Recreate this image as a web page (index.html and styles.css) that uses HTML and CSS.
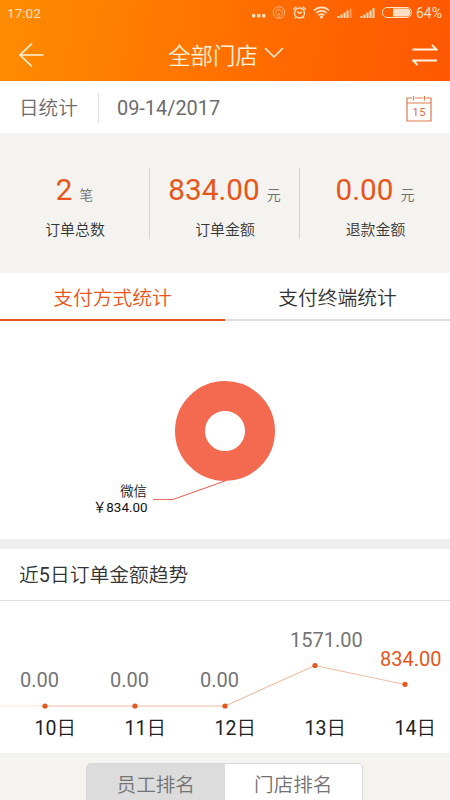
FILE: index.html
```html
<!DOCTYPE html>
<html lang="zh-CN">
<head>
<meta charset="UTF-8">
<title>全部门店</title>
<link rel="stylesheet" href="styles.css">
</head>
<body>
<header class="header">
  <div class="status">
    <span class="clock">17:02</span>
    <svg class="status-icons" width="164" height="26" viewBox="0 0 164 26" fill="none" stroke="#ffe0c2">
      <g fill="#ffe0c2" stroke="none"><rect x="1" y="14" width="3.4" height="3.4" rx="1"/><rect x="6" y="14" width="3.4" height="3.4" rx="1"/><rect x="11" y="14" width="3.4" height="3.4" rx="1"/></g>
      <g stroke="#ffb984"><circle cx="28" cy="12.5" r="5.8"/><path d="M26 15.5a3.3 3.3 0 1 1 4 0M28 13v5"/></g>
      <g stroke-width="1.4"><circle cx="48.500" cy="13" r="5"/><path d="M42.300 9.500l3-2.800M54.700 9.500l-3-2.800M46.200 11.500l2.300 1.800 2.600-1.500M45 17l-1.200 1.400M52 17l1.200 1.400"/></g>
      <g stroke-width="1.700"><path d="M63 10.500a10.500 10.500 0 0 1 15 0M65.300 13a7.300 7.300 0 0 1 10.400 0M67.600 15.400a4 4 0 0 1 5.800 0"/><circle cx="70.500" cy="17" r=".7"/></g>
      <g stroke-width="2"><path d="M87.500 16v2M90.500 14.500V18M93.500 12.500V18M96.500 10.500V18"/><path stroke="#ff9b5c" d="M99.500 8.500V18"/><path d="M110.500 16v2M113.500 14.500V18M116.500 12.500V18M119.500 10.500V18M122.500 8V18"/></g>
      <rect x="131.500" y="7.500" width="29" height="10" rx="4.500"/>
      <path fill="#ffe0c2" stroke="none" d="M142 8.500h13.500a4 4 0 0 1 4 4 4 4 0 0 1-4 4H142z"/>
    </svg>
    <span class="percent">64%</span>
  </div>
  <div class="titlebar">
    <svg width="26" height="26" viewBox="0 0 26 26" fill="none" stroke="#fff3df" stroke-width="1.700"><path d="M25.500 13H2M14 1.500L2 13l12 11.500"/></svg>
    <h1 class="title">全部门店<svg width="20" height="12" viewBox="0 0 20 12" fill="none" stroke="#fff3df" stroke-width="1.500"><path d="M1 0l9 9 9-9"/></svg></h1>
    <svg width="26" height="24" viewBox="0 0 26 24" fill="none" stroke="#fff3df" stroke-width="1.800"><path d="M0.500 6.500h24l-4.500-4.500M25 17.500H1l4.500 4.500"/></svg>
  </div>
</header>

<section class="datebar">
  <span class="period">日统计</span>
  <span class="date">09-14/2017</span>
  <svg width="26" height="27" viewBox="0 0 26 27" fill="none" stroke="#e07a4c" stroke-width="1.200"><path d="M6 3H1v23h24V3h-5M9 3h8M1 8h24M7.500 1v4.500M18.500 1v4.500"/><text class="cal-day" x="13.300" y="21" text-anchor="middle">15</text></svg>
</section>

<section class="stats">
  <div class="stat"><p class="amount">2<small>笔</small></p><p class="label">订单总数</p></div>
  <div class="stat"><p class="amount">834.00<small>元</small></p><p class="label">订单金额</p></div>
  <div class="stat"><p class="amount">0.00<small>元</small></p><p class="label">退款金额</p></div>
</section>

<nav class="tabs">
  <span class="tab active">支付方式统计</span>
  <span class="tab">支付终端统计</span>
</nav>

<section class="payment">
  <svg width="450" height="218" viewBox="0 0 450 218">
    <circle cx="225" cy="110" r="35" fill="none" stroke="#f46a50" stroke-width="30"/>
    <path d="M225 160L173 178.500h-20" fill="none" stroke="#e4685c" stroke-width="1.200"/>
    <g class="pie-label" text-anchor="end"><text class="cjk" x="147" y="174.500">微信</text><text x="147.500" y="190.500">￥834.00</text></g>
  </svg>
</section>

<section class="trend">
  <h2 class="trend-title">近<span class="num">5</span>日订单金额趋势</h2>
  <svg class="trend-chart" width="450" height="152" viewBox="0 0 450 152">
    <path d="M0 105h45" stroke="#fbe6d8"/>
    <path d="M45 105h180l90-40.500 90 19" fill="none" stroke="#ecbda4" stroke-width="1.100"/>
    <g fill="#e4571f"><circle cx="45" cy="105" r="2.600"/><circle cx="135" cy="105" r="2.600"/><circle cx="225" cy="105" r="2.600"/><circle cx="315" cy="64.500" r="2.600"/><circle cx="405" cy="83.300" r="2.600"/></g>
    <g class="values"><text x="20" y="86.300">0.00</text><text x="110" y="86.300">0.00</text><text x="200" y="86.300">0.00</text><text x="290" y="45.800">1571.00</text><text class="current" x="380" y="64.500">834.00</text></g>
    <g class="days"><text x="34.500" y="134">10<tspan class="cjk">日</tspan></text><text x="124.500" y="134">11<tspan class="cjk">日</tspan></text><text x="214.500" y="134">12<tspan class="cjk">日</tspan></text><text x="304.500" y="134">13<tspan class="cjk">日</tspan></text><text x="394.500" y="134">14<tspan class="cjk">日</tspan></text></g>
  </svg>
</section>

<section class="ranking">
  <div class="segmented"><span class="segment">员工排名</span><span class="segment selected">门店排名</span></div>
</section>
</body>
</html>
```

FILE: styles.css
```css
* { box-sizing: border-box; margin: 0; padding: 0; }
body {
  width: 450px;
  height: 800px;
  overflow: hidden;
  display: flex;
  flex-direction: column;
  background: #fff;
  color: #333;
  font-family: Roboto, "Noto Sans CJK SC", sans-serif;
}
svg { display: block; flex: none; }
.cjk { font-weight: 350; }
.num { font-weight: 400; }
.header {
  flex: none;
  height: 81px;
  background: linear-gradient(100deg, #ff8c00 0%, #ff7600 42%, #ff6500 70%, #ff5800 100%);
}
.status {
  height: 26px;
  display: flex;
  align-items: center;
  padding: 0 7px;
  color: #ffe0c2;
  font-size: 13.6px;
}
.clock { flex: 1; }
.percent { width: 28px; padding-left: 1px; font-size: 14px; }
.titlebar {
  height: 55px;
  display: flex;
  align-items: center;
  justify-content: space-between;
  padding: 3px 12px 0 18px;
}
.title {
  display: flex;
  align-items: center;
  gap: 6px;
  margin: -2px 4px 0 0;
  color: #fff3df;
  font-size: 22.4px;
  font-weight: 350;
}
.datebar {
  flex: none;
  height: 52px;
  display: flex;
  align-items: center;
  padding: 2px 18px 0 19px;
  color: #6c6c6c;
  font-size: 19.9px;
}
.period {
  width: 80px;
  height: 30px;
  line-height: 32px;
  border-right: 1px solid #ddd;
  font-size: 19.6px;
  font-weight: 350;
}
.date { flex: 1; padding-left: 18px; }
.cal-day { font: 11px Roboto, sans-serif; letter-spacing: .5px; fill: #df6b3a; stroke: none; }
.stats {
  flex: none;
  height: 140px;
  display: grid;
  grid-template-columns: 149px 150px 151px;
  align-items: center;
  background: #f4f3ef;
}
.stat { height: 71px; text-align: center; }
.stat + .stat { border-left: 1px solid #d3d3d0; }
.amount {
  height: 43px;
  line-height: 43px;
  color: #e8551a;
  font-size: 29.7px;
}
.amount small { margin-left: 7px; color: #707070; font-size: 14px; font-weight: 350; }
.label { padding-left: 1px; line-height: 38px; font-size: 14.9px; font-weight: 350; }
.tabs { flex: none; height: 48px; display: flex; }
.tab {
  flex: 1;
  border-bottom: 2px solid #dedede;
  text-align: center;
  line-height: 51px;
  font-size: 19.8px;
  font-weight: 350;
}
.active { border-color: #e8551a; color: #e8551a; }
.payment { flex: none; height: 218px; }
.pie-label { font-size: 13.4px; fill: #111; }
.trend { flex: none; height: 214px; border-top: 10px solid #eee; }
.trend-title {
  height: 52px;
  padding-left: 19px;
  border-bottom: 1px solid #dedede;
  line-height: 54px;
  font-size: 19.8px;
  font-weight: 350;
}
.values { font-size: 20px; fill: #747474; }
.values .current { fill: #e8551a; }
.days { font-size: 19.5px; fill: #222; }
.ranking {
  flex: 1;
  padding-top: 10px;
  background: #f4f3ef;
  overflow: hidden;
}
.segmented {
  width: 277px;
  height: 42px;
  margin-left: 86px;
  display: flex;
  border: 1px solid #d8d8d8;
  border-radius: 5px;
  overflow: hidden;
  background: #dcdcdc;
  color: #737373;
}
.segment { flex: 1; text-align: center; line-height: 43px; font-size: 19.6px; font-weight: 350; }
.selected { background: #fff; }
```
